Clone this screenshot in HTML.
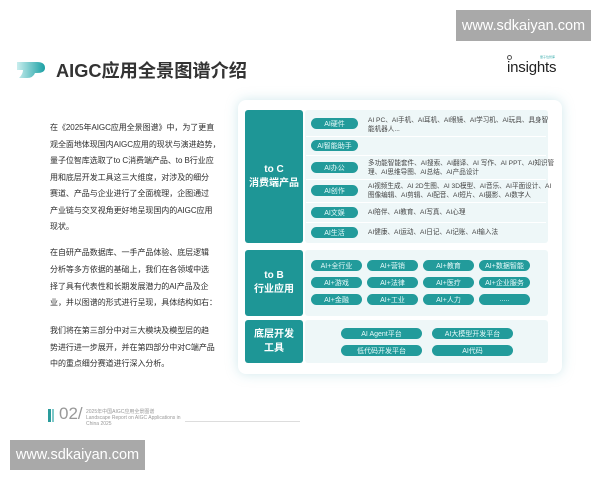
<!DOCTYPE html>
<html><head><meta charset="utf-8"><style>
*{margin:0;padding:0;box-sizing:border-box}
body{width:600px;height:480px;background:#fff;position:relative;overflow:hidden;font-family:"Liberation Sans","Noto Sans CJK SC",sans-serif;color:#333}
.a{position:absolute}
.wm{background:#a9a9a9;color:#fff;font-size:14.5px;display:flex;align-items:center;justify-content:center}
.txt div{position:absolute;left:50px;font-size:8px;white-space:nowrap;color:#2e2e2e;letter-spacing:-0.05px}
.card{left:238px;top:100px;width:324px;height:274px;background:#fff;border-radius:8px;box-shadow:0 0 12px rgba(120,190,200,0.35)}
.blk{background:#1e9696;color:#fff;border-radius:3px;display:flex;flex-direction:column;align-items:center;justify-content:center;font-size:10px;font-weight:bold;line-height:14px;text-align:center}
.bg{background:#eef7f8;border-radius:3px}
.pill{position:absolute;background:#229b9b;color:#e8fbfb;border-radius:6px;font-size:7px;display:flex;align-items:center;justify-content:center;height:11px}
.rt{position:absolute;left:368px;font-size:6.6px;color:#444;line-height:9px;white-space:nowrap}
.sep{position:absolute;left:306px;width:240px;height:1px;background:#fff}
</style></head><body>
<div class="a wm" style="left:456px;top:10px;width:135px;height:31px">www.sdkaiyan.com</div>
<div class="a wm" style="left:10px;top:440px;width:135px;height:30px">www.sdkaiyan.com</div>

<svg class="a" style="left:15px;top:59px" width="32" height="22" viewBox="0 0 32 22">
<defs><linearGradient id="g" x1="0" x2="1"><stop offset="0" stop-color="#c9eeee"/><stop offset="1" stop-color="#1aa0a4"/></linearGradient></defs>
<path d="M2 3 H22 Q30 3 30 9 Q30 14 22 14 H20 Q18 19 12 19 H4 Q8 15 8 11 H2 Z" fill="url(#g)"/>
</svg>
<div class="a" style="left:56px;top:57px;font-size:18.2px;font-weight:bold;color:#333">AIGC应用全景图谱介绍</div>
<div class="a" style="left:507px;top:59px;font-size:15px;color:#222;letter-spacing:-0.2px">insights</div>
<div class="a" style="left:507px;top:55px;width:5px;height:5px;border:1px solid #555;border-radius:50%"></div>
<div class="a" style="left:540px;top:55px;font-size:3px;color:#3aa">量子位智库</div>

<div class="txt">
<div style="top:122px">在《2025年AIGC应用全景图谱》中，为了更直</div>
<div style="top:139px">观全面地体现国内AIGC应用的现状与演进趋势，</div>
<div style="top:155px">量子位智库选取了to C消费端产品、to B行业应</div>
<div style="top:172px">用和底层开发工具这三大维度，对涉及的细分</div>
<div style="top:188px">赛道、产品与企业进行了全面梳理，企图通过</div>
<div style="top:205px">产业链与交叉视角更好地呈现国内的AIGC应用</div>
<div style="top:221px">现状。</div>
<div style="top:247px">在自研产品数据库、一手产品体验、底层逻辑</div>
<div style="top:264px">分析等多方依据的基础上，我们在各领域中选</div>
<div style="top:281px">择了具有代表性和长期发展潜力的AI产品及企</div>
<div style="top:297px">业，并以图谱的形式进行呈现，具体结构如右：</div>
<div style="top:325px">我们将在第三部分中对三大模块及模型层的趋</div>
<div style="top:342px">势进行进一步展开，并在第四部分中对C端产品</div>
<div style="top:358px">中的重点细分赛道进行深入分析。</div>
</div>

<div class="a card"></div>
<div class="a blk" style="left:245px;top:110px;width:58px;height:133px"><span>to C</span><span>消费端产品</span></div>
<div class="a bg" style="left:305px;top:110px;width:243px;height:133px"></div>
<div class="sep" style="top:136px"></div><div class="sep" style="top:155px"></div><div class="sep" style="top:179px"></div><div class="sep" style="top:202px"></div><div class="sep" style="top:222px"></div>
<div class="pill" style="left:311px;top:118px;width:47px">AI硬件</div>
<div class="pill" style="left:311px;top:140px;width:47px">AI智能助手</div>
<div class="pill" style="left:311px;top:162px;width:47px">AI办公</div>
<div class="pill" style="left:311px;top:185px;width:47px">AI创作</div>
<div class="pill" style="left:311px;top:207px;width:47px">AI文娱</div>
<div class="pill" style="left:311px;top:227px;width:47px">AI生活</div>
<div class="rt" style="top:116px">AI PC、AI手机、AI耳机、AI眼镜、AI学习机、AI玩具、具身智<br>能机器人...</div>
<div class="rt" style="top:159px">多功能智能套件、AI搜索、AI翻译、AI 写作、AI PPT、AI知识管<br>理、AI思维导图、AI总结、AI产品设计</div>
<div class="rt" style="top:182px">AI视频生成、AI 2D生图、AI 3D模型、AI音乐、AI平面设计、AI<br>图像编辑、AI剪辑、AI配音、AI短片、AI摄影、AI数字人</div>
<div class="rt" style="top:208px">AI陪伴、AI教育、AI写真、AI心理</div>
<div class="rt" style="top:228px">AI健康、AI运动、AI日记、AI记账、AI输入法</div>

<div class="a blk" style="left:245px;top:250px;width:58px;height:66px"><span>to B</span><span>行业应用</span></div>
<div class="a bg" style="left:305px;top:250px;width:243px;height:66px"></div>
<div class="pill" style="left:311px;top:260px;width:51px">AI+全行业</div>
<div class="pill" style="left:367px;top:260px;width:51px">AI+营销</div>
<div class="pill" style="left:423px;top:260px;width:51px">AI+教育</div>
<div class="pill" style="left:479px;top:260px;width:51px">AI+数据智能</div>
<div class="pill" style="left:311px;top:277px;width:51px">AI+游戏</div>
<div class="pill" style="left:367px;top:277px;width:51px">AI+法律</div>
<div class="pill" style="left:423px;top:277px;width:51px">AI+医疗</div>
<div class="pill" style="left:479px;top:277px;width:51px">AI+企业服务</div>
<div class="pill" style="left:311px;top:294px;width:51px">AI+金融</div>
<div class="pill" style="left:367px;top:294px;width:51px">AI+工业</div>
<div class="pill" style="left:423px;top:294px;width:51px">AI+人力</div>
<div class="pill" style="left:479px;top:294px;width:51px">.....</div>

<div class="a blk" style="left:245px;top:320px;width:58px;height:43px"><span>底层开发</span><span>工具</span></div>
<div class="a bg" style="left:305px;top:320px;width:243px;height:43px"></div>
<div class="pill" style="left:341px;top:328px;width:81px">AI Agent平台</div>
<div class="pill" style="left:432px;top:328px;width:81px">AI大模型开发平台</div>
<div class="pill" style="left:341px;top:345px;width:81px">低代码开发平台</div>
<div class="pill" style="left:432px;top:345px;width:81px">AI代码</div>

<div class="a" style="left:48px;top:409px;width:3px;height:13px;background:#2a9c9c"></div>
<div class="a" style="left:52px;top:409px;width:2px;height:13px;background:#7fc9c9"></div>
<div class="a" style="left:59px;top:404px;font-size:17px;color:#999">02/</div>
<div class="a" style="left:86px;top:409px;font-size:5px;color:#999;line-height:6px">2025年中国AIGC应用全景图谱<br>Landscape Report on AIGC Applications in<br>China 2025</div>
<div class="a" style="left:185px;top:421px;width:115px;height:1px;background:#ddd"></div>
</body></html>
